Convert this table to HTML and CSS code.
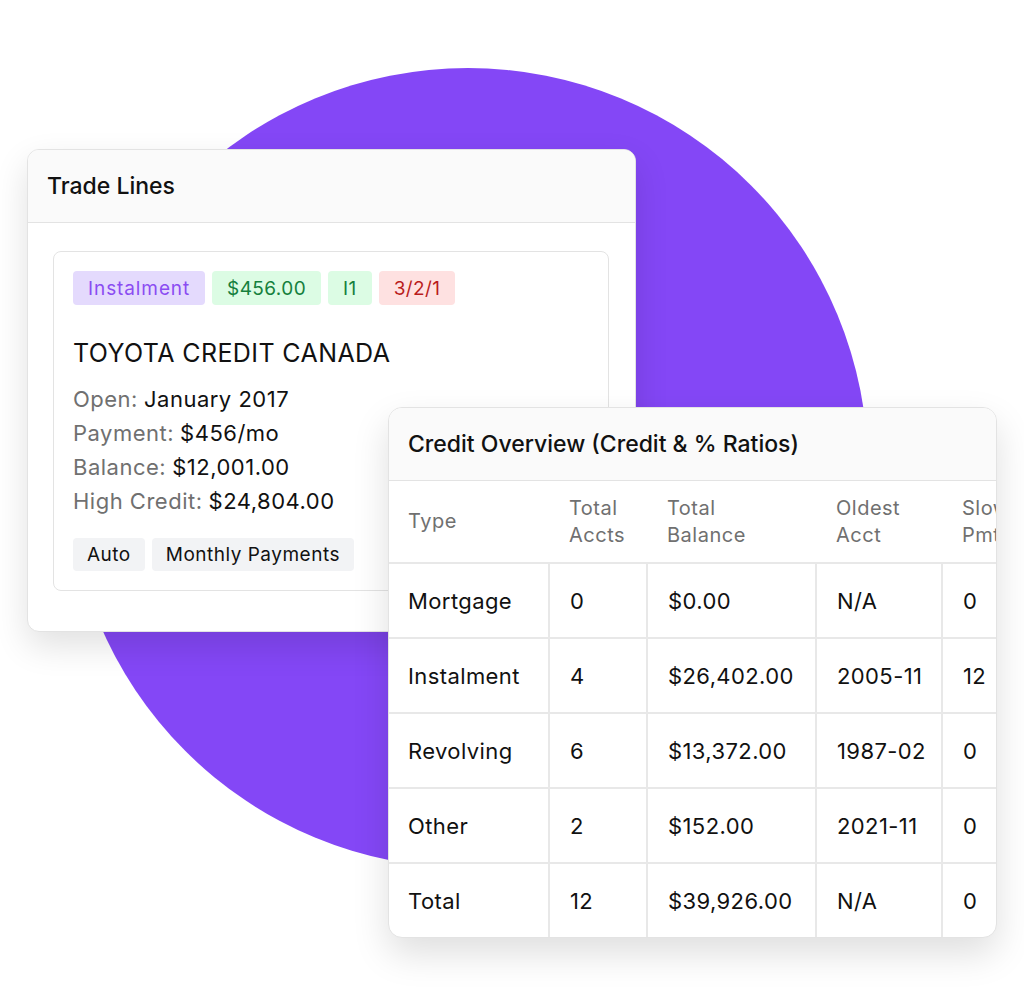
FILE: index.html
```html
<!DOCTYPE html>
<html lang="en">
<head>
<meta charset="utf-8">
<title>Trade Lines &amp; Credit Overview</title>
<link rel="stylesheet" href="styles.css">
</head>
<body>
<div class="stage">
  <div class="blob"></div>

  <section class="card trade-card">
    <header class="card-head">Trade Lines</header>
    <div class="card-body">
      <article class="trade">
        <div class="badges">
          <span class="badge badge-purple">Instalment</span>
          <span class="badge badge-green">$456.00</span>
          <span class="badge badge-green">I1</span>
          <span class="badge badge-red">3/2/1</span>
        </div>
        <h2 class="trade-name">TOYOTA CREDIT CANADA</h2>
        <dl class="facts">
          <div class="fact"><dt>Open:</dt><dd>January 2017</dd></div>
          <div class="fact"><dt>Payment:</dt><dd>$456/mo</dd></div>
          <div class="fact"><dt>Balance:</dt><dd>$12,001.00</dd></div>
          <div class="fact"><dt>High Credit:</dt><dd>$24,804.00</dd></div>
        </dl>
        <div class="tags">
          <span class="tag">Auto</span>
          <span class="tag">Monthly Payments</span>
        </div>
      </article>
    </div>
  </section>

  <section class="card overview-card">
    <header class="card-head">Credit Overview (Credit &amp; % Ratios)</header>
    <div class="table-wrap">
      <table class="overview">
        <colgroup>
          <col class="c1"><col class="c2"><col class="c3"><col class="c4"><col class="c5">
        </colgroup>
        <thead>
          <tr>
            <th>Type</th>
            <th>Total<br>Accts</th>
            <th>Total<br>Balance</th>
            <th>Oldest<br>Acct</th>
            <th>Slow<br>Pmts</th>
          </tr>
        </thead>
        <tbody>
          <tr><td>Mortgage</td><td>0</td><td>$0.00</td><td>N/A</td><td>0</td></tr>
          <tr><td>Instalment</td><td>4</td><td>$26,402.00</td><td>2005-11</td><td>12</td></tr>
          <tr><td>Revolving</td><td>6</td><td>$13,372.00</td><td>1987-02</td><td>0</td></tr>
          <tr><td>Other</td><td>2</td><td>$152.00</td><td>2021-11</td><td>0</td></tr>
          <tr><td>Total</td><td>12</td><td>$39,926.00</td><td>N/A</td><td>0</td></tr>
        </tbody>
      </table>
    </div>
  </section>
</div>
</body>
</html>
```

FILE: styles.css
```css
* { box-sizing: border-box; }

html, body {
  margin: 0;
  padding: 0;
  background: #ffffff;
}

body {
  font-family: Inter, "Noto Sans", "Liberation Sans", sans-serif;
  color: #111111;
}

.stage {
  position: relative;
  width: 1024px;
  height: 1006px;
  overflow: hidden;
}

.blob {
  position: absolute;
  left: 68px;
  top: 68px;
  width: 800px;
  height: 800px;
  border-radius: 50%;
  background: #8447f6;
}

.card {
  position: absolute;
  background: #ffffff;
  border: 1px solid #e3e3e3;
  overflow: hidden;
  box-shadow: 0 14px 34px rgba(0, 0, 0, 0.12);
}

.card-head {
  height: 73px;
  display: flex;
  align-items: center;
  padding-left: 19px;
  background: #fafafa;
  border-bottom: 1px solid #e3e3e3;
  font-size: 23px;
  font-weight: 500;
  letter-spacing: 0;
  color: #111111;
}

/* Trade lines */
.trade-card {
  left: 27px;
  top: 149px;
  width: 609px;
  height: 483px;
  border-radius: 12px;
}

.card-body {
  padding: 28px 26px 40px 25px;
}

.trade {
  border: 1px solid #e3e3e3;
  border-radius: 8px;
  padding: 19px;
}

.badges {
  display: flex;
  gap: 7px;
}

.badge {
  height: 34px;
  display: inline-flex;
  align-items: center;
  padding: 0 15px;
  border-radius: 4px;
  font-size: 19px;
  letter-spacing: 0.4px;
}

.badge-purple { background: #e4dafd; color: #8b4cf2; letter-spacing: 0.9px; }
.badge-green  { background: #dcfce4; color: #15803d; }
.badge-red    { background: #fee1e1; color: #b91c1c; }

.trade-name {
  margin: 32px 0 0;
  font-size: 25px;
  line-height: 32px;
  font-weight: 400;
  letter-spacing: 0.4px;
  color: #111111;
}

.facts {
  margin: 13px 0 0;
}

.fact {
  display: flex;
  gap: 6px;
  font-size: 22px;
  line-height: 34px;
  letter-spacing: 0.5px;
}

.fact dt { color: #707070; }
.fact dd { margin: 0; color: #111111; }

.tags {
  display: flex;
  gap: 7px;
  margin-top: 20px;
}

.tag {
  height: 33px;
  display: inline-flex;
  align-items: center;
  padding: 0 14px;
  border-radius: 4px;
  background: #f2f3f5;
  font-size: 19px;
  letter-spacing: 0.5px;
  color: #111111;
}

/* Credit overview */
.overview-card {
  left: 388px;
  top: 407px;
  width: 609px;
  height: 531px;
  border-radius: 14px;
  box-shadow: 0 16px 36px rgba(0, 0, 0, 0.13);
}

.table-wrap {
  overflow: hidden;
}

.overview {
  border-collapse: collapse;
  table-layout: fixed;
  width: 680px;
}

.c1 { width: 160px; }
.c2 { width: 98px; }
.c3 { width: 169px; }
.c4 { width: 126px; }
.c5 { width: 127px; }

.overview th {
  height: 82px;
  padding: 0 20px;
  text-align: left;
  vertical-align: middle;
  font-weight: 400;
  font-size: 20px;
  line-height: 27px;
  letter-spacing: 0.5px;
  color: #707070;
  border-bottom: 2px solid #e8e8e8;
}

.overview th:first-child { padding-left: 19px; }

.overview td {
  height: 75px;
  padding: 0 20px;
  font-size: 22px;
  letter-spacing: 0.4px;
  color: #111111;
  border-right: 2px solid #e8e8e8;
  border-bottom: 2px solid #e8e8e8;
  white-space: nowrap;
}

.overview td:first-child { padding-left: 19px; }
.overview tbody tr:last-child td { border-bottom: none; }
```
